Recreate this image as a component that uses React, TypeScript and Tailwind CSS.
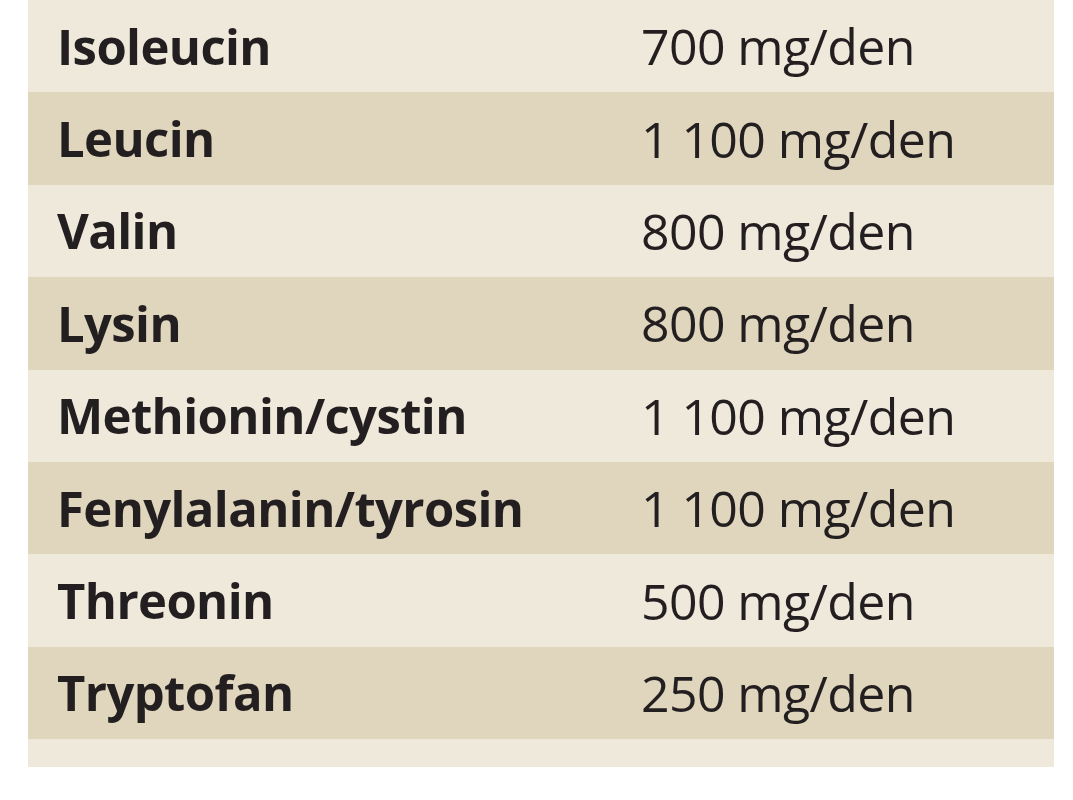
import React from 'react';

const rows: [string, string][] = [
  ['Isoleucin', '700 mg/den'],
  ['Leucin', '1 100 mg/den'],
  ['Valin', '800 mg/den'],
  ['Lysin', '800 mg/den'],
  ['Methionin/cystin', '1 100 mg/den'],
  ['Fenylalanin/tyrosin', '1 100 mg/den'],
  ['Threonin', '500 mg/den'],
  ['Tryptofan', '250 mg/den'],
];

export default function App() {
  return (
    <div className="w-[1073px] h-[800px] bg-white" style={{ fontFamily: '"Open Sans", "Noto Sans", sans-serif' }}>
      <div className="ml-[28px] w-[1026px] bg-[#efe9dc]">
        {rows.map(([name, value], i) => (
          <div
            key={name}
            className={`flex items-center h-[92.4px] text-[#231f20] ${i % 2 === 1 ? 'bg-[#e0d6bd]' : 'bg-[#efe9dc]'}`}
          >
            <div className="w-[613px] pl-[29px] font-bold text-[49px] tracking-[-0.6px] leading-none">{name}</div>
            <div className="text-[50px] tracking-[-0.6px] leading-none">{value}</div>
          </div>
        ))}
        <div className="h-[28px]" />
      </div>
    </div>
  );
}
